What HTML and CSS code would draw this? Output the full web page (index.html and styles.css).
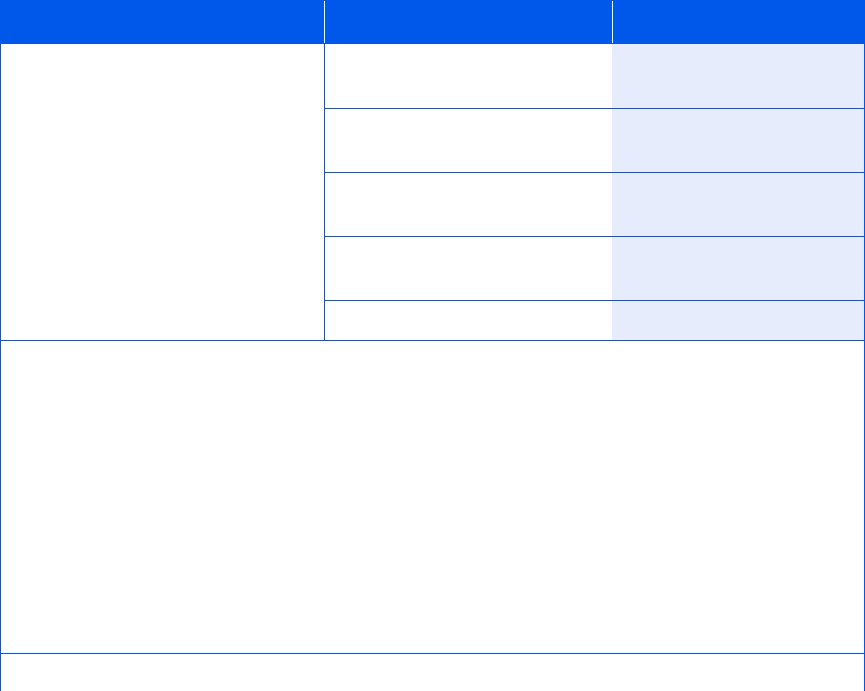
FILE: index.html
```html
<!DOCTYPE html>
<html lang="en">
<head>
<meta charset="utf-8">
<title>Table</title>
<link rel="stylesheet" href="styles.css">
</head>
<body>
<div class="table">
  <div class="th th-first"></div>
  <div class="th"></div>
  <div class="th th-last"></div>

  <div class="cell span-col1"></div>
  <div class="cell c2 row-line"></div>
  <div class="cell c3 row-line"></div>
  <div class="cell c2 row-line"></div>
  <div class="cell c3 row-line"></div>
  <div class="cell c2 row-line"></div>
  <div class="cell c3 row-line"></div>
  <div class="cell c2 row-line"></div>
  <div class="cell c3 row-line"></div>
  <div class="cell c2 row-line"></div>
  <div class="cell c3 row-line"></div>

  <div class="cell full row-line"></div>
  <div class="cell full"></div>
</div>
</body>
</html>
```
FILE: styles.css
```css
* { box-sizing: border-box; }
html, body {
  margin: 0;
  padding: 0;
  background: #ffffff;
  overflow: hidden;
  font-family: "Liberation Sans", Arial, sans-serif;
}
.table {
  display: grid;
  width: 865px;
  grid-template-columns: 325px 287px 253px;
  grid-template-rows: 44px 65px 64px 64px 64px 40px 313px 37px;
}
.th {
  background: #0058eb;
}
.th-first {
  background: linear-gradient(#ffffff, #ffffff) right center / 1px 42px no-repeat, #0058eb;
}
.th-last {
  background: linear-gradient(#ffffff, #ffffff) left center / 1px 42px no-repeat, #0058eb;
}
.cell {
  background: #ffffff;
}
.span-col1 {
  grid-column: 1;
  grid-row: 2 / span 5;
  border-left: 1px solid #0058eb;
  border-right: 1px solid #0058eb;
  border-bottom: 1px solid #0058eb;
}
.c2 {
  grid-column: 2;
}
.c3 {
  grid-column: 3;
  background: #e6ecfc;
  border-right: 1px solid #0058eb;
}
.row-line {
  border-bottom: 1px solid #0058eb;
}
.full {
  grid-column: 1 / span 3;
  border-left: 1px solid #0058eb;
  border-right: 1px solid #0058eb;
}
```
